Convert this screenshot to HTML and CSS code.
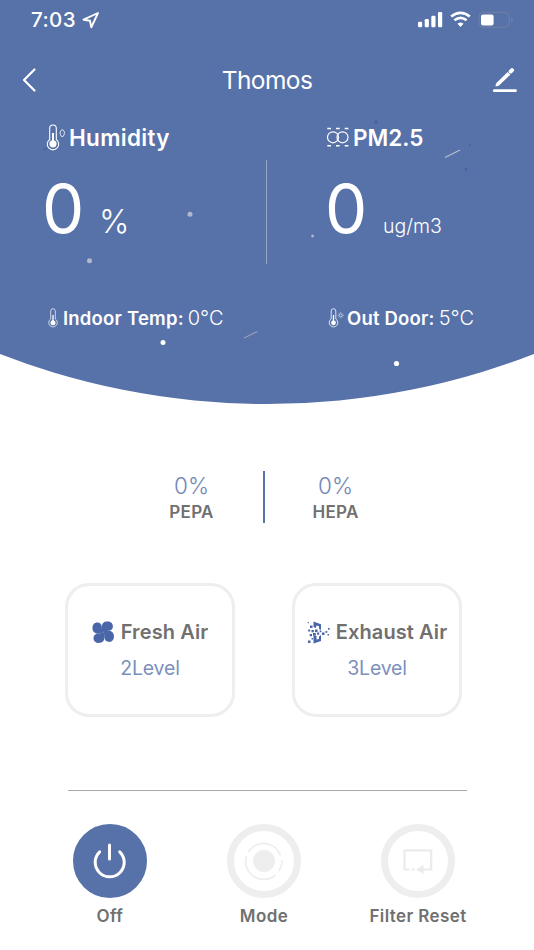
FILE: index.html
```
<!DOCTYPE html>
<html lang="en">
  <head>
    <meta charset="UTF-8" />
    <meta name="viewport" content="width=device-width, initial-scale=1.0" />
    <title>Thomos</title>
    <link rel="stylesheet" href="styles.css">
  </head>
  <body>
    <header class="hero">
      <svg class="particles" width="534" height="404" viewBox="0 0 534 404">
        <g fill="#b4b9c9">
          <circle cx="190" cy="214.3" r="2.5" />
          <circle cx="89.5" cy="260.7" r="2.5" />
          <circle cx="312.6" cy="236" r="1.4" />
        </g>
        <g fill="#fff">
          <circle cx="163" cy="342.4" r="2.5" />
          <circle cx="396.5" cy="363.5" r="2.6" />
        </g>
        <g fill="#4b629b">
          <circle cx="466" cy="169.3" r="1.4" />
          <circle cx="470" cy="145" r="1" />
          <circle cx="376" cy="122" r="1.8" />
        </g>
        <path d="M445 157.5 460 150" stroke="#b9bdca" stroke-width="1.3" />
        <path d="M244 338 257.500 331.500" stroke="#9c9fb6" stroke-width="1.1" />
        <path d="M43 150 47 148" stroke="#4b629b" stroke-width="1.5" />
      </svg>

      <div class="status-bar">
        <span class="time">7:03</span>
        <svg class="location" width="18" height="18" viewBox="0 0 18 18">
          <path d="M16 2 1.500 8.700 8 9.800 9.300 16.300Z" fill="none" stroke="#fff" stroke-width="1.900" stroke-linejoin="round" />
        </svg>
        <svg width="96" height="18" viewBox="0 0 96 18">
          <g fill="#fff">
            <rect x="0" y="10.700" width="4.200" height="5.500" rx="1.200" />
            <rect x="6.700" y="8" width="4.200" height="8.200" rx="1.200" />
            <rect x="13.300" y="4.700" width="4.200" height="11.500" rx="1.200" />
            <rect x="20" y="1" width="4.200" height="15.200" rx="1.200" />
          </g>
          <path d="M33.200 5.500Q42.500-1.900 51.800 5.500M36.400 9.300Q42.500 4.600 48.600 9.300" fill="none" stroke="#fff" stroke-width="2.700" />
          <path d="M40.100 12.700Q42.500 11.200 44.900 12.700L42.500 15.500Z" fill="#fff" stroke="#fff" stroke-linejoin="round" />
          <rect x="61.200" y="1.300" width="30" height="15" rx="4" fill="none" stroke="#7280a5" />
          <path d="M93.500 6.500Q95.900 8.800 93.500 11Z" fill="#8088a0" />
          <rect x="63" y="3.500" width="12.600" height="11" rx="2" fill="#fff" />
        </svg>
      </div>

      <nav class="navbar">
        <svg width="16" height="26" viewBox="0 0 16 26">
          <path d="M13.500 2.500 3 13 13.500 23.500" fill="none" stroke="#fff" stroke-width="2.200" stroke-linecap="round" stroke-linejoin="round" />
        </svg>
        <h1 class="title">Thomos</h1>
        <svg width="26" height="26" viewBox="0 0 26 26">
          <path d="M5.500 17.500 17 6.300" stroke="#fff" stroke-width="3.800" />
          <path d="M4 16 3.500 19.500 7 18.800Z" fill="#fff" />
          <path d="M18.700 4.500 20 3.200" stroke="#fff" stroke-width="4" stroke-linecap="round" />
          <path d="M2.300 23.700H23.500" stroke="#fff" stroke-width="2.800" stroke-linecap="round" />
        </svg>
      </nav>

      <section class="stats">
        <div class="stat humidity">
          <h2 class="stat-name">
            <svg width="20" height="28" viewBox="0 0 20 28">
              <g fill="none" stroke="#fff">
                <path d="M3.700 15.500V4.300A3.300 3.300 0 0 1 10.300 4.300V15.500A5.700 5.700 0 1 1 3.700 15.500Z" stroke-width="1.100" />
                <path d="M16.300 13C12.500 10 14.500 5.800 16.300 5.800S20 10 16.300 13Z" stroke-width=".9" />
                <path d="M7 9V18" stroke-width="2" />
              </g>
              <circle cx="7" cy="19.800" r="3.600" fill="#fff" />
            </svg>
            <span class="humidity-name">Humidity</span>
          </h2>
          <p class="reading"><span class="value">0</span><span class="percent">%</span></p>
        </div>
        <span class="hero-divider"></span>
        <div class="stat pm">
          <h2 class="stat-name">
            <svg width="24" height="22" viewBox="0 0 24 22">
              <g fill="none" stroke="#fff">
                <circle cx="7" cy="10.300" r="5.500" stroke-width="1.200" />
                <circle cx="16.500" cy="10.300" r="5.500" stroke-width="1.200" />
                <path d="M1.300 1.500H5M10 1.500H13.700M18.700 1.500H22.400M1.300 18.700H5M10 18.700H13.700M18.700 18.700H22.400" stroke-width="1.400" />
              </g>
            </svg>
            <span>PM2.5</span>
          </h2>
          <p class="reading"><span class="value">0</span><span class="unit">ug/m3</span></p>
        </div>
      </section>

      <section class="temps">
        <p class="temp indoor">
          <svg width="12" height="20" viewBox="0 0 12 20">
            <path d="M2.700 11V3A2.200 2.200 0 0 1 7.300 3V11A4.300 4.300 0 1 1 2.700 11Z" fill="none" stroke="#fff" stroke-width=".7" />
            <path d="M5 7V14" stroke="#fff" stroke-width="1.300" />
            <circle cx="5" cy="14.800" r="2.500" fill="#fff" />
          </svg>
          <b>Indoor Temp:</b><span>0°C</span>
        </p>
        <p class="temp outdoor">
          <svg width="16" height="20" viewBox="0 0 16 20">
            <path d="M3.200 11V3A2.200 2.200 0 0 1 7.800 3V11A4.300 4.300 0 1 1 3.200 11Z" fill="none" stroke="#fff" stroke-width=".8" />
            <path d="M5.500 7V14" stroke="#fff" stroke-width="1.300" />
            <circle cx="5.500" cy="14.800" r="2.400" fill="#fff" />
            <circle cx="12.700" cy="7.300" r="1.500" fill="none" stroke="#fff" stroke-width=".6" />
            <path d="M12.700 4.300V5M12.700 9.600V10.300M9.700 7.300H10.400M15 7.300H15.700M10.600 5.200 11 5.600M14.400 9 14.800 9.400M14.800 5.200 14.400 5.600M11 9 10.600 9.400" stroke="#fff" stroke-width=".7" />
          </svg>
          <b>Out Door:</b><span>5°C</span>
        </p>
      </section>
    </header>

    <main class="content">
      <section class="filters">
        <div class="filter"><span class="filter-value">0%</span><b>PEPA</b></div>
        <span class="filter-divider"></span>
        <div class="filter"><span class="filter-value">0%</span><b>HEPA</b></div>
      </section>

      <section class="cards">
        <div class="card">
          <h3 class="card-title">
            <svg width="23" height="23" viewBox="0 0 23 23">
              <g fill="#4966a9">
                <path id="blade" d="M10.800 11.200C8.800 8.500 9 1.500 14 .6C18.500-.2 21.500 2.500 20.800 6.200C20 10.600 16 9.300 13.500 10.200Q11.800 10.800 10.800 11.200Z" />
                <use href="#blade" transform="rotate(90 11.200 11.200)" />
                <use href="#blade" transform="rotate(180 11.200 11.200)" />
                <use href="#blade" transform="rotate(270 11.200 11.200)" />
              </g>
            </svg>
            <span>Fresh Air</span>
          </h3>
          <p class="level">2Level</p>
        </div>
        <div class="card">
          <h3 class="card-title">
            <svg width="23" height="23" viewBox="0 0 23 23">
              <g fill="#4966a9">
                <path d="M6.500.5 14 3.200V9L12 8V5.300L9.500 4.500 9 7 6.500 6ZM6.500 15 9.500 15V18.500L12 18V15.500L14 14V20L6.500 22.500Z" />
                <rect x="3" y="4.500" width="2.500" height="2.500" />
                <rect x="1.200" y="8.500" width="2" height="2" />
                <rect x="4.500" y="9" width="2.300" height="2.300" />
                <rect x="8" y="8.500" width="2.600" height="2.600" />
                <rect x="2.700" y="13" width="2.300" height="2.300" />
                <rect x="6" y="12" width="2.800" height="2.800" />
                <rect x="10" y="11.500" width="2.200" height="2.200" />
                <rect x="12.700" y="9.500" width="1.700" height="1.700" />
                <rect x="15" y="11.500" width="2.500" height="2.500" />
                <rect x="18.500" y="10" width="1.800" height="1.800" />
                <rect x="21" y="7" width="1.700" height="1.700" />
                <rect x="20.500" y="13" width="1.500" height="1.500" />
                <rect x="1" y="19.500" width="2.500" height="2.500" />
                <rect x="4.500" y="17" width="1.500" height="1.500" />
                <rect x=".7" y="1" width="1.200" height="1.200" />
              </g>
            </svg>
            <span>Exhaust Air</span>
          </h3>
          <p class="level">3Level</p>
        </div>
      </section>

      <footer class="controls">
        <div class="control">
          <span class="control-button active">
            <svg width="40" height="40" viewBox="0 0 40 40" fill="none" stroke="#fff" stroke-width="3" stroke-linecap="round">
              <path d="M19.500 4V18" />
              <path d="M9.700 10.800A14.500 14.500 0 1 0 29.700 10.800" />
            </svg>
          </span>
          <b class="off">Off</b>
        </div>
        <div class="control">
          <span class="control-button">
            <svg width="40" height="40" viewBox="0 0 40 40">
              <circle cx="20" cy="20" r="11" fill="#eee" />
              <path d="M4.200 11A18 18 0 0 1 36.500 14.500M38 19A18 18 0 0 1 35 30M31.500 34A18 18 0 0 1 2.500 15" fill="none" stroke="#eee" stroke-width="1.700" />
            </svg>
          </span>
          <b>Mode</b>
        </div>
        <div class="control">
          <span class="control-button">
            <svg width="40" height="40" viewBox="0 0 40 40">
              <path d="M11.500 28.500H6.500V9.300H33.200V28.500H25M13.500 28.500H16.500" fill="none" stroke="#ebebeb" stroke-width="2.200" stroke-linejoin="round" />
              <path d="M18 28.500 25.500 24V33Z" fill="#ebebeb" />
            </svg>
          </span>
          <b>Filter Reset</b>
        </div>
      </footer>
    </main>
  </body>
</html>
```
FILE: styles.css
```
* {
  margin: 0;
  padding: 0;
  box-sizing: border-box;
}

body {
  font-family: "Inter", sans-serif;
  background-color: #fff;
  color: #707070;
  width: 534px;
  height: 950px;
  overflow: hidden;
}

svg {
  display: block;
  flex: none;
}

/* blue header with the curved bottom edge */
.hero {
  position: relative;
  height: 404px;
  background-color: #5771a9;
  color: #fff;
  clip-path: circle(738px at 50% -334px);
}

.particles {
  position: absolute;
  top: 0;
  left: 0;
}

.status-bar {
  display: flex;
  align-items: center;
  height: 39px;
  padding: 0 20px 0 31px;
}

.time {
  font-size: 20.5px;
  font-weight: 500;
  letter-spacing: 0.4px;
}

.location {
  margin: 0 auto 0 6px;
}

.navbar {
  display: flex;
  align-items: center;
  justify-content: space-between;
  height: 81px;
  padding: 1px 16px 0 21px;
}

.title {
  font-size: 24.5px;
  font-weight: 400;
  letter-spacing: -0.6px;
  padding-left: 5px;
}

.stats {
  display: flex;
  height: 160px;
}

.stat {
  width: 266px;
}

.humidity {
  padding-left: 46px;
}

.pm {
  padding-left: 59px;
}

.stat-name {
  display: flex;
  align-items: center;
  gap: 3px;
  height: 35px;
  font-size: 22.5px;
  font-weight: 600;
}

.humidity-name {
  letter-spacing: 0.3px;
}

.reading {
  display: flex;
  align-items: baseline;
  line-height: 108px;
}

.value {
  width: 57px;
  font-size: 67px;
  font-weight: 400;
  letter-spacing: -2px;
  margin-left: -4px;
}

.pm .value {
  width: 58px;
  margin-left: -1px;
}

.percent {
  font-size: 32.5px;
  font-weight: 300;
}

.unit {
  font-size: 19.5px;
  font-weight: 300;
}

.hero-divider {
  width: 1px;
  height: 104px;
  margin-top: 40px;
  background-color: #96a5ca;
}

.temps {
  display: grid;
  grid-template-columns: 280px 1fr;
  padding-left: 48px;
}

.temp {
  display: flex;
  align-items: center;
  height: 76px;
  font-size: 20px;
  font-weight: 300;
}

.temp b {
  margin: 0 4px 0 3px;
  font-size: 18.5px;
  font-weight: 600;
  letter-spacing: 0.2px;
}

.filters {
  display: flex;
  justify-content: center;
  padding: 67px 7px 0 0;
}

.filter {
  display: flex;
  flex-direction: column;
  align-items: center;
  width: 142px;
}

.filter-value {
  color: #7087b8;
  font-size: 22.5px;
  font-weight: 300;
  line-height: 30px;
}

.filter b {
  font-size: 17px;
  font-weight: 600;
  letter-spacing: 0.3px;
  line-height: 22px;
}

.filter-divider {
  width: 2px;
  height: 52px;
  background-color: #5771a9;
}

.cards {
  display: flex;
  gap: 57px;
  padding: 60px 0 0 65px;
}

.card {
  display: flex;
  flex-direction: column;
  align-items: center;
  width: 170px;
  height: 134px;
  padding-top: 34px;
  border: 3px solid #eee;
  border-radius: 24px;
}

.card-title {
  display: flex;
  align-items: center;
  gap: 6px;
  height: 24px;
  font-size: 20px;
  font-weight: 600;
  letter-spacing: 0.1px;
  white-space: nowrap;
}

.level {
  color: #7c90bd;
  font-size: 19.5px;
  font-weight: 400;
  letter-spacing: -0.2px;
  line-height: 48px;
}

.controls {
  display: flex;
  justify-content: space-between;
  margin: 73px 67px 0 68px;
  padding-top: 33px;
  border-top: 1px solid #aaa;
}

.control {
  display: flex;
  flex-direction: column;
  align-items: center;
  width: 98px;
}

.control:first-child {
  margin-left: -7px;
}

.control b {
  font-size: 17px;
  font-weight: 600;
  letter-spacing: 0.4px;
  line-height: 36px;
  white-space: nowrap;
}

.control-button {
  display: flex;
  align-items: center;
  justify-content: center;
  width: 74px;
  height: 74px;
  border: 7px solid #eee;
  border-radius: 50%;
}

.active {
  border-color: #5771a9;
  background-color: #5771a9;
}
```
